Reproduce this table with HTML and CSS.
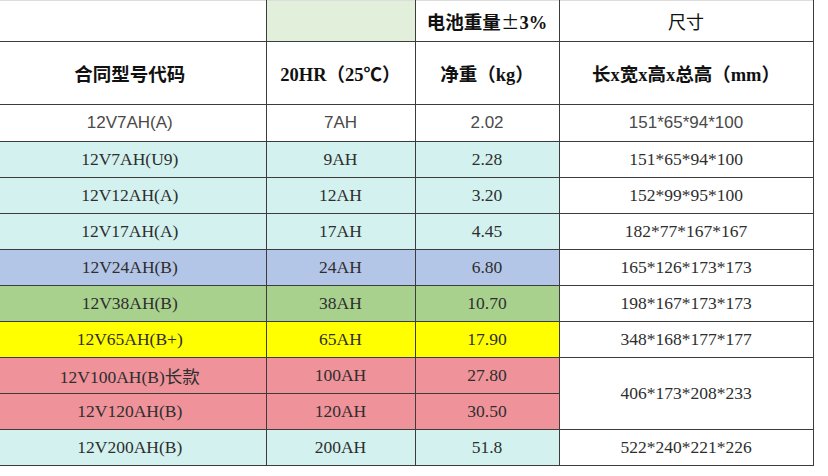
FILE: index.html
```html
<!DOCTYPE html>
<html lang="zh">
<head>
<meta charset="utf-8">
<link rel="stylesheet" href="styles.css">
</head>
<body>
<table class="spec">
  <colgroup>
    <col class="c1"><col class="c2"><col class="c3"><col class="c4">
  </colgroup>
  <tr class="h1">
    <td></td>
    <td class="g"></td>
    <td class="hb">电池重量<span class="fw">±</span>3%</td>
    <td class="hn">尺寸</td>
  </tr>
  <tr class="h2">
    <td class="hb">合同型号代码</td>
    <td class="hb">20HR（25℃）</td>
    <td class="hb">净重（kg）</td>
    <td class="hb">长x宽x高x总高（mm）</td>
  </tr>
  <tr class="r first">
    <td class="sans">12V7AH(A)</td>
    <td class="sans">7AH</td>
    <td class="sans">2.02</td>
    <td class="sans">151*65*94*100</td>
  </tr>
  <tr class="r cy">
    <td>12V7AH(U9)</td><td>9AH</td><td>2.28</td><td class="w">151*65*94*100</td>
  </tr>
  <tr class="r cy">
    <td>12V12AH(A)</td><td>12AH</td><td>3.20</td><td class="w">152*99*95*100</td>
  </tr>
  <tr class="r cy">
    <td>12V17AH(A)</td><td>17AH</td><td>4.45</td><td class="w">182*77*167*167</td>
  </tr>
  <tr class="r bl">
    <td>12V24AH(B)</td><td>24AH</td><td>6.80</td><td class="w">165*126*173*173</td>
  </tr>
  <tr class="r gr">
    <td>12V38AH(B)</td><td>38AH</td><td>10.70</td><td class="w">198*167*173*173</td>
  </tr>
  <tr class="r ye">
    <td>12V65AH(B+)</td><td>65AH</td><td>17.90</td><td class="w">348*168*177*177</td>
  </tr>
  <tr class="r pk">
    <td>12V100AH(B)长款</td><td>100AH</td><td>27.80</td><td class="w" rowspan="2">406*173*208*233</td>
  </tr>
  <tr class="r pk">
    <td>12V120AH(B)</td><td>120AH</td><td>30.50</td>
  </tr>
  <tr class="r cy">
    <td>12V200AH(B)</td><td>200AH</td><td>51.8</td><td class="w">522*240*221*226</td>
  </tr>
</table>
</body>
</html>
```
FILE: styles.css
```css
html, body {
  margin: 0;
  padding: 0;
  background: #ffffff;
}

.spec {
  border-collapse: collapse;
  table-layout: fixed;
  margin-left: -6px;
  width: 819px;
  font-family: "Liberation Serif", "Noto Sans CJK SC", serif;
  font-size: 17.5px;
  color: #2e2e2e;
  border-top: 1px solid #dddddd;
}

.c1 { width: 272px; }
.c2 { width: 149px; }
.c3 { width: 144px; }
.c4 { width: 254px; }

.spec td {
  border: 1px solid #3c3c3c;
  text-align: center;
  vertical-align: middle;
  padding: 0;
  white-space: nowrap;
}

.spec tr.h1 td {
  border-top: 1px solid #dddddd;
}

.h1 { height: 41px; }
.h2 { height: 63px; }
.r { height: 36px; }
.r.first { height: 37px; }

.spec td:first-child {
  border-left: none;
}

.g { background: #e2efda; }

.hb {
  font-weight: bold;
  font-size: 18.5px;
  color: #111111;
}

.fw {
  font-family: "Noto Sans CJK SC", sans-serif;
  font-weight: normal;
}

.hn {
  font-family: "Noto Sans CJK SC", sans-serif;
  font-size: 18px;
  color: #111111;
}

.sans {
  font-family: "Liberation Sans", Arial, sans-serif;
  font-size: 17px;
  color: #4a4a4a;
}

.cy td { background: #d3f2ef; }
.bl td { background: #b4c6e7; }
.gr td { background: #a9d18e; }
.ye td { background: #ffff00; }
.pk td { background: #ef929a; }
.spec td.w { background: #ffffff; }
```
